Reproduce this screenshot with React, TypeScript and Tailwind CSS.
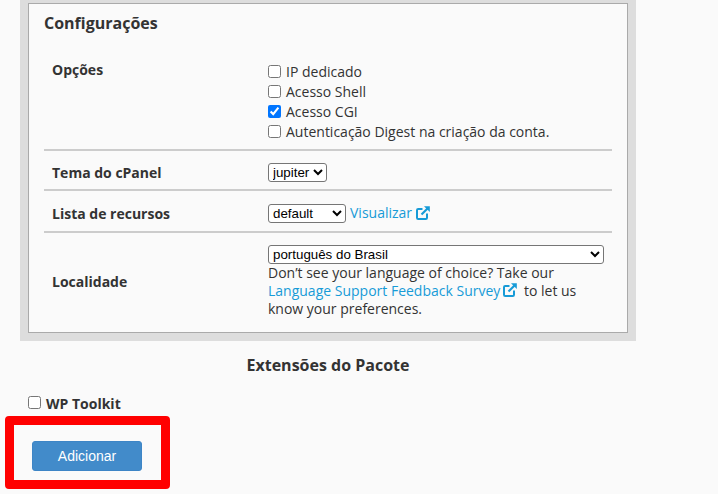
const options = [
  { label: 'IP dedicado', checked: false },
  { label: 'Acesso Shell', checked: false },
  { label: 'Acesso CGI', checked: true },
  { label: 'Autenticação Digest na criação da conta.', checked: false },
]

const ExternalLinkIcon = ({ className }: { className?: string }) => (
  <svg viewBox="0 0 14 14" fill="none" stroke="currentColor" className={className}>
    <path d="M6.5 3H2.2C1.5 3 1 3.5 1 4.2v7.6c0 .7.5 1.2 1.2 1.2h7.6c.7 0 1.2-.5 1.2-1.2V7.5" strokeWidth="2" />
    <path d="M5.5 8.5 12 2" strokeWidth="2.2" />
    <path d="M8 .2h5.8V6z" fill="currentColor" stroke="none" />
  </svg>
)

export default function App() {
  return (
    <div className="h-[494px] w-[718px] overflow-hidden bg-[#fafafa] font-['Open_Sans',sans-serif] text-[14px] leading-[20px] text-[#333]">
      <div className="ml-5 w-[616px] bg-[#ddd] px-2 pt-[3px] pb-2">
        <div className="h-[330px] border border-[#aaa] bg-[#fafafa] px-[15px]">
          <h3 className="pt-[8px] text-[16px] leading-[22px] font-bold">Configurações</h3>

          <div className="mt-[20px] flex h-[97px] border-b-2 border-[#ccc]">
            <div className="w-[224px] pt-[6px] pl-2 font-bold">Opções</div>
            <div className="flex flex-col pt-[8px]">
              {options.map((option) => (
                <label key={option.label} className="flex h-5 items-center gap-[5px]">
                  <input type="checkbox" defaultChecked={option.checked} className="m-0 mb-[2px] size-[13px]" />
                  {option.label}
                </label>
              ))}
            </div>
          </div>

          <div className="flex h-[40px] items-center border-b-2 border-[#ccc] pt-[5px]">
            <div className="w-[224px] pl-2 font-bold">Tema do cPanel</div>
            <select className="h-[19px] w-[59px] appearance-auto rounded-[3px] border border-[#767676] bg-white font-['Liberation_Sans',sans-serif] text-[13.33px] text-black">
              <option>jupiter</option>
            </select>
          </div>

          <div className="flex h-[42px] items-center border-b-2 border-[#ccc] pt-[4px]">
            <div className="mt-[2px] w-[224px] pl-2 font-bold">Lista de recursos</div>
            <select className="h-[19px] w-[78px] appearance-auto rounded-[3px] border border-[#767676] bg-white font-['Liberation_Sans',sans-serif] text-[13.33px] text-black">
              <option>default</option>
            </select>
            <a className="ml-1 flex items-center gap-1 text-[#179bd7]">
              Visualizar
              <ExternalLinkIcon className="size-[14px]" />
            </a>
          </div>

          <div className="flex items-center pt-3">
            <div className="w-[224px] pl-2 font-bold">Localidade</div>
            <div className="w-[336px]">
              <select className="block h-[19px] w-[336px] appearance-auto rounded-[3px] border border-[#767676] bg-white font-['Liberation_Sans',sans-serif] text-[13.33px] text-black">
                <option>português do Brasil</option>
              </select>
              <p className="leading-[18px]">
                Don’t see your language of choice? Take our{' '}
                <a className="text-[#179bd7]">
                  Language Support Feedback Survey
                  <ExternalLinkIcon className="mr-[3px] ml-[3px] inline size-[14px] align-[-1px]" />
                </a>{' '}
                to let us know your preferences.
              </p>
            </div>
          </div>
        </div>
      </div>

      <h3 className="mt-[13px] w-[656px] text-center text-[16px] leading-[22px] font-bold">Extensões do Pacote</h3>

      <label className="mt-[18px] ml-7 flex h-5 items-center gap-[5px] font-bold">
        <input type="checkbox" className="m-0 mb-[3px] size-[13px]" />
        WP Toolkit
      </label>

      <div className="mt-[2px] ml-[5px] h-[73px] w-[165px] rounded-[4px] border-[9px] border-[#ff0000] pt-4 pl-[18px]">
        <button className="block h-[30px] w-[110px] rounded-[3px] border border-[#3d85c6] bg-[#428bca] font-['Liberation_Sans',sans-serif] text-[14px] text-white">
          Adicionar
        </button>
      </div>
    </div>
  )
}
